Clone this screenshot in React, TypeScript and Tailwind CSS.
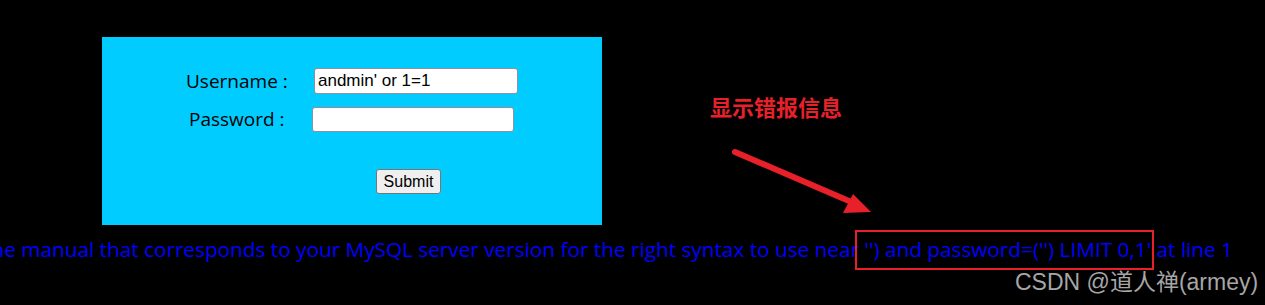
import React from 'react';

const ERROR_TEXT =
  "You have an error in your SQL syntax; check the manual that corresponds to your MySQL server version for the right syntax to use near '') and password=('') LIMIT 0,1' at line 1";

export default function App() {
  return (
    <div className="relative h-[305px] w-[1265px] overflow-hidden bg-black">
      {/* login form panel */}
      <div className="ml-[102px] pt-[37px]">
        <div
          className="relative h-[188px] w-[500px] bg-[#00ccff] text-black"
          style={{ fontFamily: '"Open Sans", "Noto Sans", sans-serif' }}
        >
          <div className="flex items-center pt-[31px]">
            <span className="ml-[84px] w-[128px] text-[19px] leading-[26px]">Username :</span>
            <input
              defaultValue="andmin' or 1=1"
              className="h-[26px] w-[204px] rounded-[3px] border border-[#8f8f9d] bg-white px-[3px] text-[17px] text-black outline-none"
              style={{ fontFamily: '"Liberation Sans", Arial, sans-serif' }}
            />
          </div>
          <div className="mt-[13px] flex items-center">
            <span className="ml-[87px] w-[123px] text-[19px] leading-[25px]">Password :</span>
            <input
              type="password"
              className="h-[25px] w-[202px] rounded-[3px] border border-[#8f8f9d] bg-white px-[3px] text-[16px] outline-none"
            />
          </div>
          <div className="mt-[37px] pl-[274px]">
            <button
              className="h-[25px] w-[65px] rounded-[3px] border border-[#767676] bg-[#efefef] text-[16px] leading-[23px] text-black"
              style={{ fontFamily: '"Liberation Sans", Arial, sans-serif' }}
            >
              Submit
            </button>
          </div>
        </div>
      </div>

      {/* sql error message */}
      <div className="mt-[10px] flex justify-end overflow-hidden pr-[32px]">
        <span
          className="whitespace-nowrap text-[20.75px] leading-[28px] text-[#0000ff]"
          style={{ fontFamily: '"Open Sans", "Noto Sans", sans-serif' }}
        >
          {ERROR_TEXT}
        </span>
      </div>

      {/* annotation overlay */}
      <div
        className="absolute left-[710px] top-[92px] text-[22px] font-bold leading-[28px] text-[#e8202a]"
        style={{ fontFamily: '"Noto Sans CJK SC", sans-serif' }}
      >
        显示错报信息
      </div>
      <svg className="absolute left-0 top-0" width="1265" height="305">
        <line x1="735" y1="152" x2="856" y2="204" stroke="#e8202a" strokeWidth="6" strokeLinecap="round" />
        <polygon points="871,212 843,213 853,194" fill="#e8202a" />
      </svg>
      <div className="absolute left-[855px] top-[230px] h-[40px] w-[299px] border-2 border-[#e8202a]" />

      {/* watermark */}
      <div
        className="absolute left-[1015px] top-[268px] text-[23px] leading-[28px] text-[#a6a6a6]"
        style={{ fontFamily: '"Liberation Sans", "Noto Sans CJK SC", sans-serif' }}
      >
        CSDN @道人禅(armey)
      </div>
    </div>
  );
}
